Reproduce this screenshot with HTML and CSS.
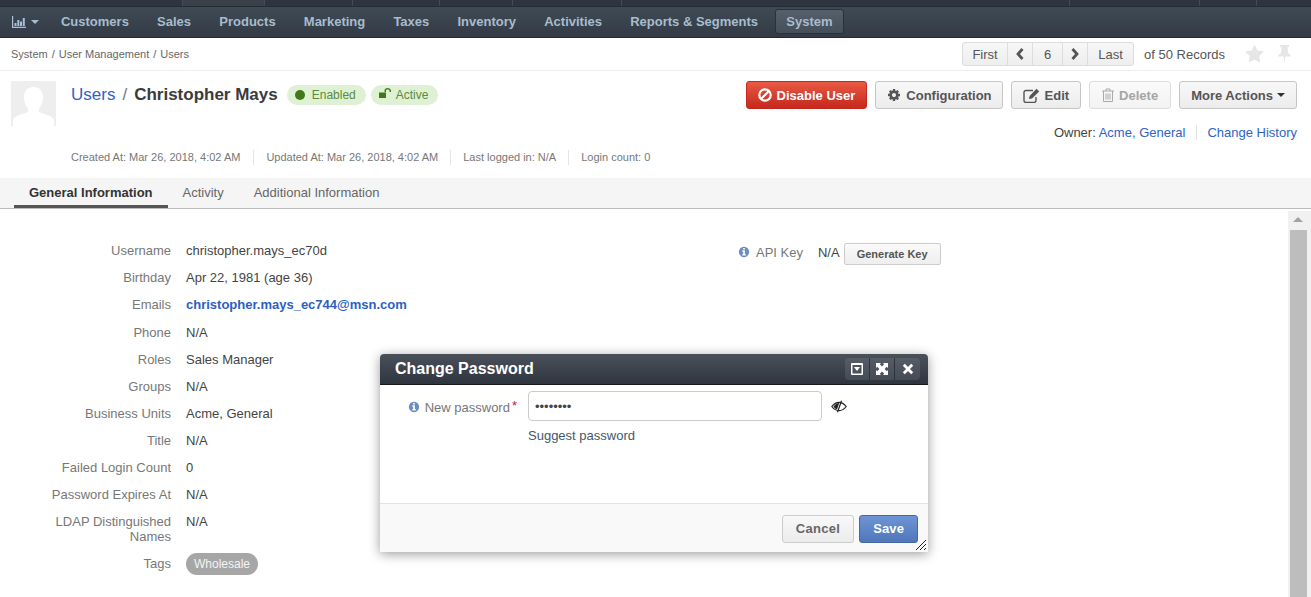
FILE: index.html
```html
<!DOCTYPE html>
<html lang="en">
<head>
  <meta charset="UTF-8" />
  <title>Christopher Mays - Users</title>
  <link rel="stylesheet" href="styles.css">
</head>
<body>
  <div class="top-strip">
    <span class="strip-cell w183"></span>
    <span class="strip-cell strip-active w82"></span>
    <span class="strip-cell w88"></span>
    <span class="strip-cell w87"></span>
    <span class="strip-cell w73"></span>
    <span class="strip-cell w109"></span>
    <span class="strip-cell w448"></span>
    <span class="strip-cell w130"></span>
    <span class="strip-cell w57"></span>
  </div>

  <nav class="main-nav">
    <a class="nav-item nav-chart">
      <svg class="chart-icon" viewBox="0 0 14 12"><path d="M0 0h1.200v10.800H14V12H0zM2.500 7h2v3H2.500zM5.300 4h2v6h-2zM8 5.500h2V10H8zM10.800 2h2v8h-2z"/></svg>
      <span class="caret caret-light"></span>
    </a>
    <a class="nav-item">Customers</a>
    <a class="nav-item">Sales</a>
    <a class="nav-item">Products</a>
    <a class="nav-item">Marketing</a>
    <a class="nav-item">Taxes</a>
    <a class="nav-item">Inventory</a>
    <a class="nav-item">Activities</a>
    <a class="nav-item">Reports &amp; Segments</a>
    <a class="nav-item nav-current">System</a>
  </nav>

  <div class="crumb-bar">
    <div class="crumbs">System<span class="crumb-sep">/</span>User Management<span class="crumb-sep">/</span>Users</div>
    <div class="pager-wrap">
      <div class="pager">
        <a class="pager-cell cell-first">First</a>
        <a class="pager-cell cell-arrow"><svg class="chev" viewBox="0 0 10 14"><path d="M7.500 2 3 7l4.500 5"/></svg></a>
        <a class="pager-cell cell-num">6</a>
        <a class="pager-cell cell-arrow"><svg class="chev" viewBox="0 0 10 14"><path d="M2.500 2 7 7l-4.500 5"/></svg></a>
        <a class="pager-cell cell-first">Last</a>
      </div>
      <span class="pager-total">of 50 Records</span>
      <svg class="star-icon" viewBox="0 0 1792 1792"><path d="M1728 647q0 22-26 48l-363 354 86 500q1 7 1 20 0 21-10.500 35.500t-30.500 14.500q-19 0-40-12l-449-236-449 236q-22 12-40 12-21 0-31.500-14.500t-10.500-35.500q0-6 2-20l86-500-364-354q-25-27-25-48 0-37 56-46l502-73 225-455q19-41 49-41t49 41l225 455 502 73q56 9 56 46z"/></svg>
      <svg class="pin-icon" viewBox="0 0 13 18"><path d="M2 0h9v2H9.500l.5 6c1.500.7 3 2 3 3.500H7.500L6.500 18l-1-6.500H0C0 10 1.500 8.700 3 8l.5-6H2z"/></svg>
    </div>
  </div>

  <header class="record-head">
    <div class="head-top">
      <div class="avatar">
        <svg viewBox="0 0 45 45"><path d="M22.500 6c6 0 9.500 4 9.500 10.500 0 4.500-1.700 8.500-4 11v3.500c5 2.500 12 3 15 7.500v6.500H2v-6.500c3-4.500 10-5 15-7.500v-3.500c-2.300-2.500-4-6.500-4-11C13 10 16.500 6 22.500 6z"/></svg>
      </div>
      <h1 class="record-title"><a class="link">Users</a><span class="title-sep">/</span><b>Christopher Mays</b></h1>
      <span class="badge">
        <span class="badge-dot"></span>Enabled
      </span>
      <span class="badge">
        <svg class="lock-icon" viewBox="0 0 12 10"><path d="M0 4.500h7V10H0zM5.500 4V2.500C5.500 1 6.800 0 8.500 0S12 1 12 2.500V4h-1.500V2.500c0-.7-.9-1-2-1s-1.500.3-1.500 1V4z"/></svg>Active
      </span>
      <div class="actions">
        <a class="btn btn-danger">
          <svg class="btn-icon ban-icon" viewBox="0 0 14 14"><circle cx="7" cy="7" r="5.700"/><path d="M3 11 11 3"/></svg>Disable User
        </a>
        <a class="btn btn-config">
          <svg class="btn-icon" viewBox="0 0 1792 1792"><path d="M1152 896q0-106-75-181t-181-75-181 75-75 181 75 181 181 75 181-75 75-181zm512-109v222q0 12-8 23t-20 13l-185 28q-19 54-39 91 35 50 107 138 10 12 10 25t-9 23q-27 37-99 108t-94 71q-12 0-26-9l-138-108q-44 23-91 38-16 136-29 186-7 28-36 28h-222q-14 0-24.500-8.500t-11.500-21.500l-28-184q-49-16-90-37l-141 107q-10 9-25 9-14 0-25-11-126-114-165-168-7-10-7-23 0-12 8-23 15-21 51-66.500t54-70.500q-27-50-41-99l-183-27q-13-2-21-12.500t-8-23.500v-222q0-12 8-23t19-13l186-28q14-46 39-92-40-57-107-138-10-12-10-24 0-10 9-23 26-36 98.500-107.500t94.500-71.500q13 0 26 10l138 107q44-23 91-38 16-136 29-186 7-28 36-28h222q14 0 24.500 8.500t11.500 21.500l28 184q49 16 90 37l142-107q9-9 24-9 13 0 25 10 129 119 165 170 7 8 7 22 0 12-8 23-15 21-51 66.500t-54 70.500q26 50 41 98l183 28q13 2 21 12.500t8 23.500z"/></svg>Configuration
        </a>
        <a class="btn">
          <svg class="btn-icon edit-icon" viewBox="0 0 17 15"><path class="edit-box" d="M10 2.500H3A2 2 0 0 0 1 4.500v8a2 2 0 0 0 2 2h8a2 2 0 0 0 2-2V9"/><path class="edit-pen" d="M6 11l.6-3L13.500.8l2.700 2.700L9 10.400z"/></svg>Edit
        </a>
        <a class="btn btn-disabled">
          <svg class="btn-icon trash-icon" viewBox="0 0 12 14"><path d="M0 3h12M4 3V1h4v2M1.500 3v10.500h9V3M4 5.500v6M6 5.500v6M8 5.500v6"/></svg>Delete
        </a>
        <a class="btn">More Actions<span class="caret"></span></a>
      </div>
    </div>
    <div class="owner-row">
      <span class="owner">Owner: <a class="link">Acme, General</a></span>
      <a class="link">Change History</a>
    </div>
    <div class="meta-row">
      <span class="meta">Created At: Mar 26, 2018, 4:02 AM</span>
      <span class="meta">Updated At: Mar 26, 2018, 4:02 AM</span>
      <span class="meta">Last logged in: N/A</span>
      <span class="meta">Login count: 0</span>
    </div>
  </header>

  <div class="tabs">
    <a class="tab tab-active">General Information</a>
    <a class="tab">Activity</a>
    <a class="tab">Additional Information</a>
  </div>

  <div class="content-wrap">
    <main class="content">
      <dl class="details">
        <dt>Username</dt><dd>christopher.mays_ec70d</dd>
        <dt>Birthday</dt><dd>Apr 22, 1981 (age 36)</dd>
        <dt>Emails</dt><dd><a class="email">christopher.mays_ec744@msn.com</a></dd>
        <dt>Phone</dt><dd>N/A</dd>
        <dt>Roles</dt><dd>Sales Manager</dd>
        <dt>Groups</dt><dd>N/A</dd>
        <dt>Business Units</dt><dd>Acme, General</dd>
        <dt>Title</dt><dd>N/A</dd>
        <dt>Failed Login Count</dt><dd>0</dd>
        <dt>Password Expires At</dt><dd>N/A</dd>
        <dt>LDAP Distinguished Names</dt><dd>N/A</dd>
        <dt>Tags</dt><dd><span class="tag">Wholesale</span></dd>
      </dl>
      <div class="api-key">
        <svg class="info-icon" viewBox="0 0 1792 1792"><path d="M1152 1376v-160q0-14-9-23t-23-9h-96v-512q0-14-9-23t-23-9h-320q-14 0-23 9t-9 23v160q0 14 9 23t23 9h96v320h-96q-14 0-23 9t-9 23v160q0 14 9 23t23 9h448q14 0 23-9t9-23zm-128-896v-160q0-14-9-23t-23-9h-192q-14 0-23 9t-9 23v160q0 14 9 23t23 9h192q14 0 23-9t9-23zm640 416q0 209-103 385.500t-279.500 279.500-385.500 103-385.500-103-279.500-279.500-103-385.500 103-385.500 279.500-279.500 385.500-103 385.500 103 279.500 279.500 103 385.500z"/></svg>
        <span class="api-label">API Key</span>
        <span class="api-value">N/A</span>
        <a class="btn-small">Generate Key</a>
      </div>
    </main>
    <div class="scrollbar">
      <span class="scroll-arrow"></span>
      <span class="scroll-thumb"></span>
    </div>
  </div>

  <div class="dialog">
    <div class="dialog-head">
      <span class="dialog-title">Change Password</span>
      <div class="dialog-controls">
        <a class="ctl">
          <svg viewBox="0 0 12 12"><path fill-rule="evenodd" d="M1 0h10a1 1 0 0 1 1 1v10a1 1 0 0 1-1 1H1a1 1 0 0 1-1-1V1a1 1 0 0 1 1-1zm.5 2v8.500h9V2zM3 4h6L6 8z"/></svg>
        </a>
        <a class="ctl">
          <svg viewBox="0 0 12 12"><path d="M0 0h5L3.800 1.200 6 3.400 8.200 1.200 7 0h5v5l-1.200-1.200L8.600 6l2.200 2.200L12 7v5H7l1.200-1.200L6 8.600l-2.200 2.200L5 12H0V7l1.200 1.200L3.400 6 1.200 3.800 0 5z"/></svg>
        </a>
        <a class="ctl">
          <svg viewBox="0 0 12 12"><path d="M2.800.8 6 4 9.200.8l2 2L8 6l3.200 3.200-2 2L6 8l-3.200 3.200-2-2L4 6 .8 2.800z"/></svg>
        </a>
      </div>
    </div>
    <div class="dialog-body">
      <div class="field">
        <div class="field-label">
          <svg class="info-icon" viewBox="0 0 1792 1792"><path d="M1152 1376v-160q0-14-9-23t-23-9h-96v-512q0-14-9-23t-23-9h-320q-14 0-23 9t-9 23v160q0 14 9 23t23 9h96v320h-96q-14 0-23 9t-9 23v160q0 14 9 23t23 9h448q14 0 23-9t9-23zm-128-896v-160q0-14-9-23t-23-9h-192q-14 0-23 9t-9 23v160q0 14 9 23t23 9h192q14 0 23-9t9-23zm640 416q0 209-103 385.500t-279.500 279.500-385.500 103-385.500-103-279.500-279.500-103-385.500 103-385.500 279.500-279.500 385.500-103 385.500 103 279.500 279.500 103 385.500z"/></svg>
          <span>New password</span><em class="req">*</em>
        </div>
        <input class="field-input" type="password" value="password" />
        <svg class="eye-icon" viewBox="0 0 16 13"><path class="eye-line" d="M.8 6.500C3 3.700 5.300 2.400 8 2.400s5 1.300 7.200 4.100C13 9.300 10.700 10.600 8 10.600S3 9.300.8 6.500z"/><path d="M2.500 6.500C4 4.500 5.800 3.200 8.200 3L6 9.600C4.600 9 3.500 8 2.500 6.500z"/><path class="eye-line" d="M10.500.8 6.500 12.200"/></svg>
      </div>
      <a class="suggest">Suggest password</a>
    </div>
    <div class="dialog-foot">
      <a class="dlg-btn">Cancel</a>
      <a class="dlg-btn dlg-primary">Save</a>
    </div>
    <svg class="resizer" viewBox="0 0 10 10"><path d="M0 10 10 0M4 10l6-6M8 10l2-2"/></svg>
  </div>
</body>
</html>
```

FILE: styles.css
```css
* {
  box-sizing: border-box;
}
html, body {
  height: 100%;
}
body {
  margin: 0;
  display: flex;
  flex-direction: column;
  overflow: hidden;
  font-family: "Liberation Sans", Arial, sans-serif;
  font-size: 13px;
  color: #444;
  background: #fff;
}
a {
  cursor: pointer;
}
.link {
  color: #2f62c4;
}

/* top strip */
.top-strip {
  display: flex;
  flex: none;
  height: 7px;
  background: #2f3540;
  border-bottom: 1px solid #262b33;
}
.strip-cell {
  border-right: 1px solid #444b56;
}
.strip-active {
  background: #3a414b;
}
.w183 { width: 183px; }
.w82 { width: 82px; }
.w88 { width: 88px; }
.w87 { width: 87px; }
.w73 { width: 73px; }
.w109 { width: 109px; }
.w448 { width: 448px; }
.w130 { width: 130px; }
.w57 { width: 57px; }

/* main nav */
.main-nav {
  display: flex;
  flex: none;
  align-items: center;
  gap: 6.200px;
  height: 31px;
  padding: 0 0 1px 2px;
  background: linear-gradient(#3f4a54, #333b45);
  border-bottom: 1px solid #242932;
}
.nav-item {
  display: flex;
  align-items: center;
  height: 25px;
  padding: 0 10px;
  font-weight: bold;
  color: #a8bccf;
  border: 1px solid transparent;
  border-radius: 3px;
}
.nav-chart {
  gap: 5px;
  padding: 0 0 0 9px;
  margin-right: 3.800px;
}
.chart-icon {
  width: 14px;
  height: 12px;
  fill: #a8c0da;
}
.nav-current {
  background: linear-gradient(#54606c, #454f5a);
  border-color: #2b313a;
}
.caret {
  display: inline-block;
  margin-left: 4px;
  border-top: 4px solid #333;
  border-left: 4px solid transparent;
  border-right: 4px solid transparent;
}
.caret-light {
  margin-left: 0;
  border-top-color: #a8bccf;
}

/* breadcrumb + pager */
.crumb-bar {
  display: flex;
  flex: none;
  align-items: center;
  justify-content: space-between;
  height: 33px;
  padding: 0 20px 0 11px;
  border-bottom: 1px solid #eee;
}
.crumbs {
  font-size: 11px;
  color: #666;
}
.crumb-sep {
  margin: 0 4px;
}
.pager-wrap {
  display: flex;
  align-items: center;
}
.pager {
  display: flex;
  height: 24px;
  background: linear-gradient(#f7f7f7, #eee);
  border: 1px solid #ddd;
  border-radius: 3px;
}
.pager-cell {
  display: flex;
  align-items: center;
  justify-content: center;
  color: #555;
  border-right: 1px solid #ddd;
}
.pager-cell:last-child {
  border-right: 0;
}
.cell-first {
  width: 45px;
}
.cell-arrow {
  width: 25px;
}
.cell-num {
  width: 30px;
}
.chev {
  width: 10px;
  height: 14px;
  fill: none;
  stroke: #555;
  stroke-width: 2.800;
}
.pager-total {
  margin-left: 10px;
  color: #555;
}
.star-icon {
  width: 19px;
  height: 19px;
  margin-left: 20px;
  fill: #e6e6e6;
}
.pin-icon {
  width: 13px;
  height: 18px;
  margin-left: 14px;
  fill: #e6e6e6;
}

/* record header */
.record-head {
  flex: none;
  height: 107px;
  padding: 10px 14px 0 11px;
}
.head-top {
  display: flex;
  align-items: flex-start;
}
.avatar {
  width: 45px;
  height: 45px;
  margin-right: 15px;
  background: #eee;
}
.avatar svg {
  display: block;
  fill: #fff;
}
.record-title {
  margin: 4px 9px 0 0;
  font-size: 17px;
  font-weight: normal;
  line-height: 20px;
}
.record-title b {
  color: #3b3b3b;
}
.title-sep {
  margin: 0 7px;
  color: #777;
}
.badge {
  display: flex;
  align-items: center;
  height: 20px;
  margin: 4px 5px 0 0;
  padding: 0 10px 0 8px;
  font-size: 12px;
  color: #5c8a3d;
  background: #dff1d5;
  border-radius: 10px;
}
.badge-dot {
  width: 10px;
  height: 10px;
  margin-right: 7px;
  background: #3f7a16;
  border-radius: 50%;
}
.lock-icon {
  width: 12px;
  height: 10px;
  margin: -4px 5px 0 0;
  fill: #3f7a16;
}
.actions {
  display: flex;
  gap: 8px;
  margin-left: auto;
}
.btn {
  display: flex;
  align-items: center;
  height: 28px;
  padding: 0 11px;
  font-weight: bold;
  color: #555;
  white-space: nowrap;
  background: linear-gradient(#f8f8f8, #ececec);
  border: 1px solid #c6c6c6;
  border-radius: 3px;
}
.btn-danger {
  color: #fff;
  background: linear-gradient(#e95a43, #c5281c);
  border-color: #c5281c;
}
.btn-config {
  padding-right: 10px;
}
.btn-disabled {
  padding: 0 12px;
  color: #a5a5a5;
  background: linear-gradient(#fafafa, #f3f3f3);
  border-color: #ddd;
}
.btn-icon {
  width: 14px;
  height: 14px;
  margin-right: 5px;
  fill: #555;
}
.ban-icon {
  fill: none;
  stroke: #fff;
  stroke-width: 2.200;
}
.edit-icon {
  width: 17px;
  height: 15px;
  fill: none;
}
.edit-box {
  stroke: #555;
  stroke-width: 1.400;
}
.edit-pen {
  fill: #555;
}
.trash-icon {
  width: 12px;
  fill: none;
  stroke: #aaa;
}
.owner-row {
  display: flex;
  justify-content: flex-end;
  align-items: center;
  height: 15px;
  margin-top: -1px;
}
.owner {
  padding-right: 11px;
  margin-right: 10px;
  border-right: 1px solid #e2e2e2;
}
.meta-row {
  display: flex;
  margin: 10px 0 0 60px;
  font-size: 11px;
  color: #777;
}
.meta {
  padding-right: 12px;
  margin-right: 12px;
  border-right: 1px solid #e5e5e5;
  line-height: 15px;
}
.meta:first-child {
  padding-right: 13px;
}
.meta:last-child {
  border-right: 0;
}

/* tabs */
.tabs {
  display: flex;
  flex: none;
  height: 31px;
  padding-left: 14px;
  background: #f5f5f5;
  border-bottom: 1px solid #bbb;
}
.tab {
  height: 30px;
  padding: 7px 15px 0;
  color: #666;
}
.tab-active {
  font-weight: bold;
  color: #333;
  border-bottom: 3px solid #555;
}

/* details */
.content-wrap {
  display: flex;
  flex: 1;
  min-height: 0;
}
.content {
  display: flex;
  flex: 1;
  padding-top: 34.250px;
}
.details {
  display: grid;
  grid-template-columns: 171px 330px;
  column-gap: 15px;
  row-gap: 12.100px;
  align-content: start;
  margin: 0;
  line-height: 15px;
}
.details dt {
  padding-left: 16px;
  color: #777;
  text-align: right;
}
.details dd {
  margin: 0;
  color: #444;
}
.email {
  font-weight: bold;
  color: #2b5fc4;
}
.tag {
  display: inline-block;
  margin-top: -3px;
  padding: 0 8px;
  font-size: 12px;
  line-height: 22px;
  color: #f4f4f4;
  background: #a6a6a6;
  border-radius: 11px;
}
.api-key {
  display: flex;
  align-items: center;
  height: 24px;
  margin: -3px 0 0 222px;
}
.info-icon {
  width: 12px;
  height: 12px;
  margin-right: 6px;
  fill: #6d8cc0;
}
.api-label {
  color: #777;
}
.api-value {
  margin-left: 15px;
}
.btn-small {
  margin: 4px 0 0 4px;
  padding: 0 12px;
  font-size: 11px;
  font-weight: bold;
  line-height: 20px;
  color: #555;
  background: linear-gradient(#fafafa, #eee);
  border: 1px solid #ccc;
  border-radius: 2px;
}
.scrollbar {
  flex: none;
  display: flex;
  flex-direction: column;
  align-items: flex-start;
  width: 23px;
  margin-top: 2px;
  padding-left: 2px;
  background: #f1f1f1;
}
.scroll-arrow {
  margin: 6px 0 0 3px;
  border-bottom: 5px solid #a3a3a3;
  border-left: 5px solid transparent;
  border-right: 5px solid transparent;
}
.scroll-thumb {
  flex: 1;
  width: 17px;
  margin-top: 8px;
  background: #bdbdbd;
}

/* change password dialog */
.dialog {
  position: absolute;
  top: 354px;
  left: 380px;
  display: flex;
  flex-direction: column;
  width: 548px;
  height: 198px;
  background: #fff;
  border-radius: 4px 4px 0 0;
  box-shadow: 0 2px 12px rgba(0, 0, 0, 0.4);
}
.dialog-head {
  display: flex;
  flex: none;
  align-items: center;
  justify-content: space-between;
  height: 31px;
  padding: 0 8px 0 15px;
  background: linear-gradient(#4b515b, #2f353f);
  border-bottom: 1px solid #15181d;
  border-radius: 4px 4px 0 0;
}
.dialog-title {
  font-size: 16px;
  font-weight: bold;
  color: #fff;
}
.dialog-controls {
  display: flex;
  height: 22px;
  background: linear-gradient(#565d67, #454b55);
  border-radius: 4px;
}
.ctl {
  display: flex;
  align-items: center;
  justify-content: center;
  width: 25px;
  border-right: 1px solid #2f343c;
}
.ctl:last-child {
  border-right: 0;
}
.ctl svg {
  width: 12px;
  height: 12px;
  fill: #fff;
}
.dialog-body {
  flex: 1;
  padding: 6px 0 0 148px;
}
.field {
  display: flex;
  align-items: center;
  position: relative;
}
.field-label {
  position: absolute;
  right: 100%;
  display: flex;
  align-items: center;
  margin: 2px 11px 0 0;
  color: #777;
  white-space: nowrap;
}
.field-label .info-icon {
  margin-right: 5px;
}
.req {
  margin: -4px 0 0 2px;
  font-style: normal;
  color: #c0174b;
}
.field-input {
  width: 294px;
  height: 30px;
  padding: 0 6px;
  font-family: inherit;
  font-size: 13px;
  color: #444;
  border: 1px solid #ccc;
  border-radius: 4px;
}
.eye-icon {
  width: 16px;
  height: 13px;
  margin-left: 9px;
  fill: #222;
}
.eye-line {
  fill: none;
  stroke: #222;
  stroke-width: 1.200;
}
.suggest {
  display: block;
  margin-top: 7px;
  color: #44586c;
}
.dialog-foot {
  display: flex;
  flex: none;
  justify-content: flex-end;
  gap: 5px;
  height: 49px;
  padding: 11px 10px 0 0;
  background: #f9f9f9;
  border-top: 1px solid #e2e2e2;
}
.dlg-btn {
  height: 28px;
  padding: 0 13px;
  font-weight: bold;
  line-height: 26px;
  color: #666;
  letter-spacing: 0.300px;
  background: linear-gradient(#f9f9f9, #ececec);
  border: 1px solid #ccc;
  border-radius: 3px;
}
.dlg-primary {
  letter-spacing: 0.100px;
  color: #fff;
  background: linear-gradient(#6d95d6, #4f77b9);
  border-color: #46689f;
}
.resizer {
  position: absolute;
  right: 2px;
  bottom: 2px;
  width: 10px;
  height: 10px;
  fill: none;
  stroke: #222;
  stroke-width: 1;
}
```
